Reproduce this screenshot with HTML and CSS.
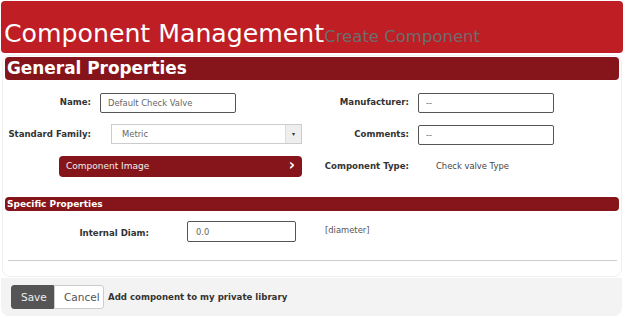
FILE: index.html
```html
<!DOCTYPE html>
<html lang="en">
<head>
    <meta charset="UTF-8">
    <title>Component Management</title>
    <link rel="stylesheet" href="styles.css">
</head>
<body>
    <div class="header">
        <h1>Component Management</h1>
        <small>Create Component</small>
    </div>

    <div class="panel">
        <h2 class="section-title">General Properties</h2>

        <div class="general">
            <label>Name:</label>
            <div><input class="field name-field" type="text" value="Default Check Valve"></div>
            <label>Manufacturer:</label>
            <div><input class="field" type="text" value="--"></div>

            <label>Standard Family:</label>
            <div class="select">
                <span>Metric</span>
                <span class="select-arrow">&#9662;</span>
            </div>
            <label>Comments:</label>
            <div><input class="field" type="text" value="--"></div>

            <button class="image-button">
                <span>Component Image</span>
                <span class="chevron">&#8250;</span>
            </button>
            <label>Component Type:</label>
            <div class="type-value">Check valve Type</div>
        </div>

        <h3 class="section-title small">Specific Properties</h3>

        <div class="specific">
            <label>Internal Diam:</label>
            <input class="field diam-field" type="text" value="0.0">
            <span class="unit">[diameter]</span>
        </div>

        <hr>
    </div>

    <div class="footer">
        <div class="btn-group">
            <button class="btn save">Save</button>
            <button class="btn cancel">Cancel</button>
        </div>
        <span class="footer-note">Add component to my private library</span>
    </div>
</body>
</html>
```

FILE: styles.css
```css
body {
    font-family: "DejaVu Sans", Verdana, sans-serif;
    margin: 0;
    padding: 0;
    background-color: #fff;
    color: #333;
}
.header {
    display: flex;
    align-items: baseline;
    height: 52px;
    margin: 1px 2px 0 1px;
    padding: 0 3px;
    background-color: #be1e24;
    border-radius: 4px;
    box-sizing: border-box;
}
.header h1 {
    margin: 18px 0 0;
    font-size: 25.2px;
    font-weight: normal;
    color: #fff;
}
.header small {
    font-size: 16.5px;
    color: #6d6d6d;
}
.panel {
    margin: 2px 3px 0 2px;
    padding: 1px 2px 15px;
    border: 1px solid #f0f0f0;
    border-radius: 8px;
}
.section-title {
    margin: 0;
    padding: 0 2px;
    height: 23px;
    line-height: 23px;
    font-size: 16.9px;
    font-weight: bold;
    color: #fff;
    background-color: #86151b;
    border-radius: 4px;
}
.section-title.small {
    height: 14px;
    line-height: 14px;
    font-size: 9px;
    padding: 0 2px;
}
label {
    font-size: 8.6px;
    font-weight: bold;
    color: #333;
    text-align: right;
}
.general {
    display: grid;
    grid-template-columns: 86px 202px 98px 1fr;
    grid-auto-rows: 20px;
    column-gap: 9px;
    row-gap: 12px;
    align-items: center;
    margin: 12px 0 21px;
}
.field {
    box-sizing: border-box;
    width: 136px;
    height: 20px;
    padding: 0 7px;
    border: 1px solid #555;
    border-radius: 2px;
    font-family: inherit;
    font-size: 8.4px;
    color: #666;
    background: #fff;
}
.select {
    display: flex;
    align-items: center;
    justify-content: space-between;
    box-sizing: border-box;
    height: 20px;
    margin-left: 11px;
    border: 1px solid #ccc;
    font-size: 8.4px;
    color: #666;
}
.select span:first-child {
    padding-left: 10px;
}
.select-arrow {
    width: 15px;
    height: 18px;
    line-height: 18px;
    text-align: center;
    font-size: 6px;
    color: #333;
    background-color: #eee;
    border-left: 1px solid #ddd;
}
.image-button {
    grid-column: 1 / 3;
    justify-self: end;
    display: flex;
    align-items: center;
    justify-content: space-between;
    width: 243px;
    height: 21px;
    padding: 0 7px;
    border: none;
    border-radius: 4px;
    background-color: #86151b;
    color: #eee;
    font-family: inherit;
    font-size: 9px;
}
.chevron {
    font-size: 15px;
    font-weight: bold;
    color: #fff;
    line-height: 1;
    margin-top: -2px;
}
.type-value {
    padding-left: 18px;
    font-size: 8.4px;
    color: #444;
}
.specific {
    display: grid;
    grid-template-columns: 144px 109px 1fr;
    column-gap: 38px;
    align-items: start;
    margin-top: 10px;
}
.specific label {
    margin-top: 7px;
}
.diam-field {
    width: 109px;
    height: 21px;
    padding: 0 8px;
}
.unit {
    margin-left: -9px;
    margin-top: 4px;
    font-size: 8.4px;
    color: #555;
}
hr {
    margin: 18px 2px 0 3px;
    border: none;
    border-top: 1px solid #ccc;
}
.footer {
    display: flex;
    align-items: center;
    gap: 4px;
    height: 38px;
    margin: 1px 3px 0 1px;
    padding: 0 10px;
    background-color: #f3f3f3;
    border-radius: 0 0 8px 8px;
}
.btn-group {
    display: flex;
}
.btn {
    height: 24px;
    padding: 0 9px;
    border: 1px solid #ccc;
    font-family: inherit;
    font-size: 10.5px;
    color: #555;
    background-color: #fff;
}
.btn.save {
    width: 43px;
    background-color: #555;
    border-color: #555;
    color: #eee;
    border-radius: 3px 0 0 3px;
}
.btn.cancel {
    width: 50px;
    border-radius: 0 3px 3px 0;
}
.footer-note {
    font-size: 8.6px;
    font-weight: bold;
    color: #333;
}
```
